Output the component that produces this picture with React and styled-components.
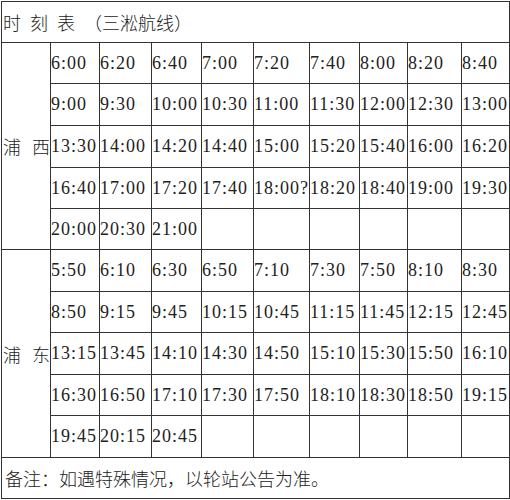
import styled, { createGlobalStyle } from "styled-components";

const GlobalStyle = createGlobalStyle`
	html, body {
		margin: 0;
		padding: 0;
		background: #ffffff;
	}
	body {
		font-family: "Liberation Serif", "Noto Sans CJK SC", serif;
		color: #222222;
	}
`;

// cell interiors between the 1px rules
const COLS = [48, 48, 51, 49, 51, 55, 49, 47, 53, 47];
const ROWS = [40, 40, 41, 41, 40, 40, 41, 40, 41, 40, 41, 40];

const Sheet = styled.div`
	margin: 1px 0 0 1px;
	width: max-content;
	display: grid;
	grid-template-columns: ${COLS.map((c) => c + "px").join(" ")};
	grid-template-rows: ${ROWS.map((r) => r + "px").join(" ")};
	gap: 1px;
	padding: 1px;
	background: #333333;
`;

const Cell = styled.div`
	background: #ffffff;
	display: flex;
	align-items: center;
	white-space: nowrap;
`;

const TitleCell = styled(Cell)`
	grid-column: 1 / -1;
	padding-left: 1px;
	font-family: "Noto Sans CJK SC", sans-serif;
	font-size: 18px;
	font-weight: 300;
	word-spacing: 5px;
`;

const SideLabel = styled(Cell)`
	grid-column: 1;
	grid-row: span 5;
	padding-left: 1px;
	gap: 11px;
	font-family: "Noto Sans CJK SC", sans-serif;
	font-size: 18px;
	font-weight: 300;
`;

const TimeCell = styled(Cell)`
	font-family: "Liberation Serif", serif;
	font-size: 18px;
	letter-spacing: 1px;
`;

const NoteCell = styled(Cell)`
	grid-column: 1 / -1;
	padding-left: 3px;
	font-family: "Noto Sans CJK SC", sans-serif;
	font-size: 18px;
	font-weight: 300;
`;

const puxi = [
	["6:00", "6:20", "6:40", "7:00", "7:20", "7:40", "8:00", "8:20", "8:40"],
	["9:00", "9:30", "10:00", "10:30", "11:00", "11:30", "12:00", "12:30", "13:00"],
	["13:30", "14:00", "14:20", "14:40", "15:00", "15:20", "15:40", "16:00", "16:20"],
	["16:40", "17:00", "17:20", "17:40", "18:00?", "18:20", "18:40", "19:00", "19:30"],
	["20:00", "20:30", "21:00", "", "", "", "", "", ""],
];

const pudong = [
	["5:50", "6:10", "6:30", "6:50", "7:10", "7:30", "7:50", "8:10", "8:30"],
	["8:50", "9:15", "9:45", "10:15", "10:45", "11:15", "11:45", "12:15", "12:45"],
	["13:15", "13:45", "14:10", "14:30", "14:50", "15:10", "15:30", "15:50", "16:10"],
	["16:30", "16:50", "17:10", "17:30", "17:50", "18:10", "18:30", "18:50", "19:15"],
	["19:45", "20:15", "20:45", "", "", "", "", "", ""],
];

const Section = ({ label, rows }) => (
	<>
		<SideLabel>
			<span>{label[0]}</span>
			<span>{label[1]}</span>
		</SideLabel>
		{rows.map((row, r) =>
			row.map((t, c) => <TimeCell key={label + r + "-" + c}>{t}</TimeCell>)
		)}
	</>
);

const App = () => {
	return (
		<>
			<GlobalStyle />
			<Sheet>
				<TitleCell>时 刻 表 （三淞航线）</TitleCell>
				<Section label="浦西" rows={puxi} />
				<Section label="浦东" rows={pudong} />
				<NoteCell>备注：如遇特殊情况，以轮站公告为准。</NoteCell>
			</Sheet>
		</>
	);
};

export default App;
